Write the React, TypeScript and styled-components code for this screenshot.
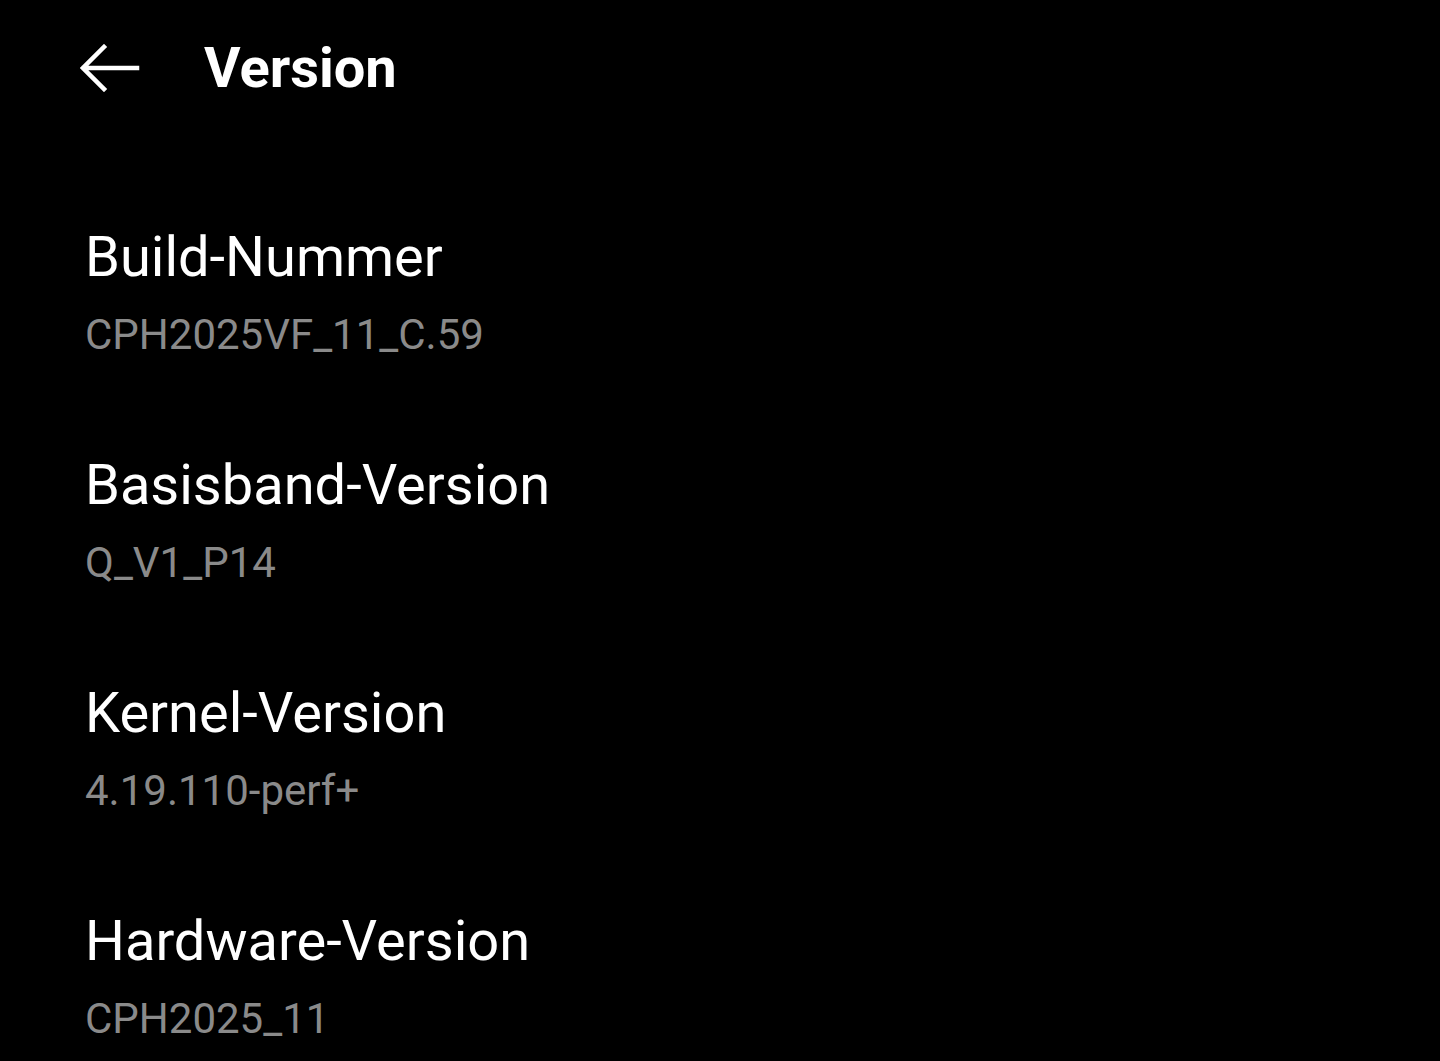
import React from "react";
import styled, { createGlobalStyle } from "styled-components";

const GlobalStyle = createGlobalStyle`
  html, body {
    margin: 0;
    padding: 0;
    background: #000;
  }
  body {
    font-family: Roboto, "Noto Sans", sans-serif;
    color: #fff;
  }
`;

const Screen = styled.div`
  width: 1440px;
  height: 1061px;
  overflow: hidden;
  background: #000;
`;

const Toolbar = styled.div`
  display: flex;
  align-items: center;
  height: 136px;
  padding-left: 80px;
`;

const BackButton = styled.div`
  display: flex;
  align-items: center;
  justify-content: center;
  width: 60px;
  height: 60px;
  margin-right: 64px;
`;

const Title = styled.h1`
  margin: 0;
  font-size: 56px;
  font-weight: 700;
  line-height: 1;
`;

const List = styled.div`
  display: flex;
  flex-direction: column;
  padding: 86px 0 0 85px;
`;

const Item = styled.div`
  display: flex;
  flex-direction: column;
  height: 228px;
`;

const ItemTitle = styled.div`
  font-size: 56px;
  line-height: 70px;
  color: #fff;
`;

const ItemValue = styled.div`
  font-size: 42px;
  line-height: 56px;
  color: #8a8a8a;
  margin-top: 15px;
`;

const BackArrow = () => (
  <svg width="60" height="48" viewBox="0 0 60 48" fill="none">
    <path d="M57 24H4M24 3L3 24l21 21" stroke="#fff" strokeWidth="4.5" strokeLinecap="square" />
  </svg>
);

const items = [
  { title: "Build-Nummer", value: "CPH2025VF_11_C.59" },
  { title: "Basisband-Version", value: "Q_V1_P14" },
  { title: "Kernel-Version", value: "4.19.110-perf+" },
  { title: "Hardware-Version", value: "CPH2025_11" },
];

const App: React.FC = () => {
  return (
    <Screen>
      <GlobalStyle />
      <Toolbar>
        <BackButton>
          <BackArrow />
        </BackButton>
        <Title>Version</Title>
      </Toolbar>
      <List>
        {items.map((item) => (
          <Item key={item.title}>
            <ItemTitle>{item.title}</ItemTitle>
            <ItemValue>{item.value}</ItemValue>
          </Item>
        ))}
      </List>
    </Screen>
  );
};

export default App;
